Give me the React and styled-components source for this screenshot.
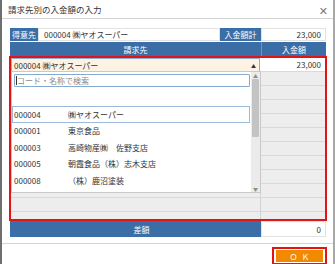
import React from "react";
import styled, { createGlobalStyle } from "styled-components";

const Global = createGlobalStyle`
  html, body { margin: 0; padding: 0; background: #fff; }
  body { font-family: "Noto Sans CJK JP", "Noto Sans", sans-serif; }
  * { box-sizing: border-box; }
`;

const BLUE = "#3b6ea6";

const Dialog = styled.div`
  width: 335px;
  height: 264px;
  overflow: hidden;
  border-left: 2px solid #6f6f6f;
  border-right: 2px solid #a8a8a8;
  background: #fff;
  display: flex;
  flex-direction: column;
`;

const TitleBar = styled.div`
  height: 19px;
  flex: none;
  display: flex;
  align-items: center;
  justify-content: space-between;
  padding: 0 5px 0 6px;
  border-bottom: 1px solid #d4d4d4;
  font-size: 8.5px;
  color: #333;
`;

const Close = styled.span`
  font-size: 11px;
  color: #777;
  font-family: "DejaVu Sans", sans-serif;
  margin-top: 4px;
`;

const Body = styled.div`
  padding: 9px 7px 0 8px;
  display: flex;
  flex-direction: column;
`;

const InfoRow = styled.div`
  display: flex;
  height: 13px;
  margin-bottom: 1px;
`;

const Label = styled.div`
  background: ${BLUE};
  color: #fff;
  font-size: 8px;
  display: flex;
  align-items: center;
  justify-content: center;
  width: ${(p) => p.$w}px;
  flex: none;
`;

const Value = styled.div`
  font-size: 8px;
  color: #333;
  display: flex;
  align-items: center;
  justify-content: ${(p) => (p.$right ? "flex-end" : "flex-start")};
  padding: 0 4px 0 5px;
  border: 1px solid #e2e2e2;
  width: ${(p) => (p.$w ? p.$w + "px" : "auto")};
  flex: ${(p) => (p.$w ? "none" : "1")};
`;

const HeaderRow = styled.div`
  display: flex;
  height: 14px;
  background: ${BLUE};
  color: #fff;
  font-size: 8px;
`;

const HeadCell = styled.div`
  display: flex;
  align-items: center;
  justify-content: center;
  width: ${(p) => (p.$w ? p.$w + "px" : "auto")};
  flex: ${(p) => (p.$w ? "none" : "1")};
  border-left: ${(p) => (p.$sep ? "1px solid #6e95c0" : "none")};
`;

const Frame = styled.div`
  position: relative;
  height: 165px;
  margin-left: -1px;
  margin-right: -1px;
  border: 2px solid #e41414;
  overflow: hidden;
  display: flex;
  flex-direction: column;
`;

const Row = styled.div`
  display: flex;
  height: 14px;
  flex: none;
`;

const Cell = styled.div`
  width: ${(p) => (p.$w ? p.$w + "px" : "auto")};
  flex: ${(p) => (p.$w ? "none" : "1")};
  background: #ededed;
  border-bottom: 1px solid #d9d9d9;
  border-left: ${(p) => (p.$sep ? "1px solid #d2d2d2" : "none")};
`;

const SelectCell = styled.div`
  flex: 1;
  background: #fdf3e4;
  border: 1px solid #8eb0d6;
  font-size: 8px;
  color: #333;
  display: flex;
  align-items: center;
  justify-content: space-between;
  padding: 0 3px 0 2px;
`;

const Arrow = styled.span`
  font-size: 5px;
  color: #333;
`;

const AmountCell = styled.div`
  width: 65px;
  flex: none;
  background: #fff;
  font-size: 8px;
  color: #333;
  display: flex;
  align-items: center;
  justify-content: flex-end;
  padding-right: 4px;
  border-bottom: 1px solid #d9d9d9;
`;

const Panel = styled.div`
  position: absolute;
  left: 0;
  top: 13px;
  width: 250px;
  height: 122px;
  background: #fff;
  border: 1px solid #c9c9c9;
  display: flex;
`;

const PanelMain = styled.div`
  flex: 1;
  display: flex;
  flex-direction: column;
  padding: 2px 1px 0 2px;
`;

const Search = styled.div`
  height: 13px;
  border: 1px solid #86a9d0;
  border-radius: 1px;
  font-size: 8px;
  color: #8a8a8a;
  display: flex;
  align-items: center;
  padding-left: 1px;
  margin-bottom: 19px;
`;

const Caret = styled.span`
  width: 1px;
  height: 9px;
  background: #333;
`;

const Item = styled.div`
  display: flex;
  align-items: center;
  height: 16.5px;
  flex: none;
  font-size: 8px;
  color: #333;
  margin-left: -2px;
  border: 1px solid ${(p) => (p.$sel ? "#9cb8da" : "transparent")};
`;

const Code = styled.span`
  width: 55px;
  padding-left: 1px;
`;

const Scroll = styled.div`
  width: 9px;
  flex: none;
  background: #ebebeb;
  display: flex;
  flex-direction: column;
  align-items: center;
`;

const ScrollArrow = styled.span`
  font-size: 5px;
  color: #8c8c8c;
  line-height: 7px;
  height: 7px;
`;

const Thumb = styled.div`
  width: 7px;
  height: 58px;
  background: #c3c3c3;
  border-radius: 1px;
`;

const Spacer = styled.div`
  flex: 1;
`;

const DiffRow = styled.div`
  display: flex;
  height: 16px;
`;

const DiffLabel = styled.div`
  flex: 1;
  background: ${BLUE};
  color: #fff;
  font-size: 8px;
  display: flex;
  align-items: center;
  justify-content: center;
  padding-left: 12px;
`;

const Separator = styled.div`
  height: 1px;
  background: #d4d4d4;
  margin: 6px -7px 3px -8px;
`;

const Footer = styled.div`
  display: flex;
  justify-content: flex-end;
`;

const OkOutline = styled.div`
  border: 2px solid #e41414;
  padding: 1px 2px;
  margin-right: -1px;
`;

const OkButton = styled.div`
  width: 47px;
  height: 12px;
  background: #f28a00;
  color: #fff;
  font-size: 8px;
  letter-spacing: 4px;
  display: flex;
  align-items: center;
  justify-content: center;
  padding-left: 4px;
`;

const items = [
  ["000004", "㈱ヤオスーパー", true],
  ["000001", "東京食品"],
  ["000003", "高崎物産㈱　佐野支店"],
  ["000005", "朝霞食品（株）志木支店"],
  ["000008", "（株）鹿沼塗装"],
];

export default function App() {
  const rows = Array.from({ length: 11 });
  return (
    <>
      <Global />
      <Dialog>
        <TitleBar>
          <span>請求先別の入金額の入力</span>
          <Close>✕</Close>
        </TitleBar>
        <Body>
          <InfoRow>
            <Label $w={28}>得意先</Label>
            <Value>000004 ㈱ヤオスーパー</Value>
            <Label $w={41}>入金額計</Label>
            <Value $w={65} $right>23,000</Value>
          </InfoRow>
          <HeaderRow>
            <HeadCell>請求先</HeadCell>
            <HeadCell $w={65} $sep>入金額</HeadCell>
          </HeaderRow>
          <Frame>
            <Row>
              <SelectCell>
                <span>000004 ㈱ヤオスーパー</span>
                <Arrow>▲</Arrow>
              </SelectCell>
              <AmountCell>23,000</AmountCell>
            </Row>
            {rows.map((_, i) => (
              <Row key={i}>
                <Cell />
                <Cell $w={65} $sep />
              </Row>
            ))}
            <Panel>
              <PanelMain>
                <Search>
                  <Caret />
                  コード・名称で検索
                </Search>
                {items.map(([c, n, s]) => (
                  <Item key={c} $sel={s}>
                    <Code>{c}</Code>
                    <span>{n}</span>
                  </Item>
                ))}
              </PanelMain>
              <Scroll>
                <ScrollArrow>▲</ScrollArrow>
                <Thumb />
                <Spacer />
                <ScrollArrow>▼</ScrollArrow>
              </Scroll>
            </Panel>
          </Frame>
          <DiffRow>
            <DiffLabel>差額</DiffLabel>
            <Value $w={65} $right>0</Value>
          </DiffRow>
          <Separator />
          <Footer>
            <OkOutline>
              <OkButton>ＯＫ</OkButton>
            </OkOutline>
          </Footer>
        </Body>
      </Dialog>
    </>
  );
}
